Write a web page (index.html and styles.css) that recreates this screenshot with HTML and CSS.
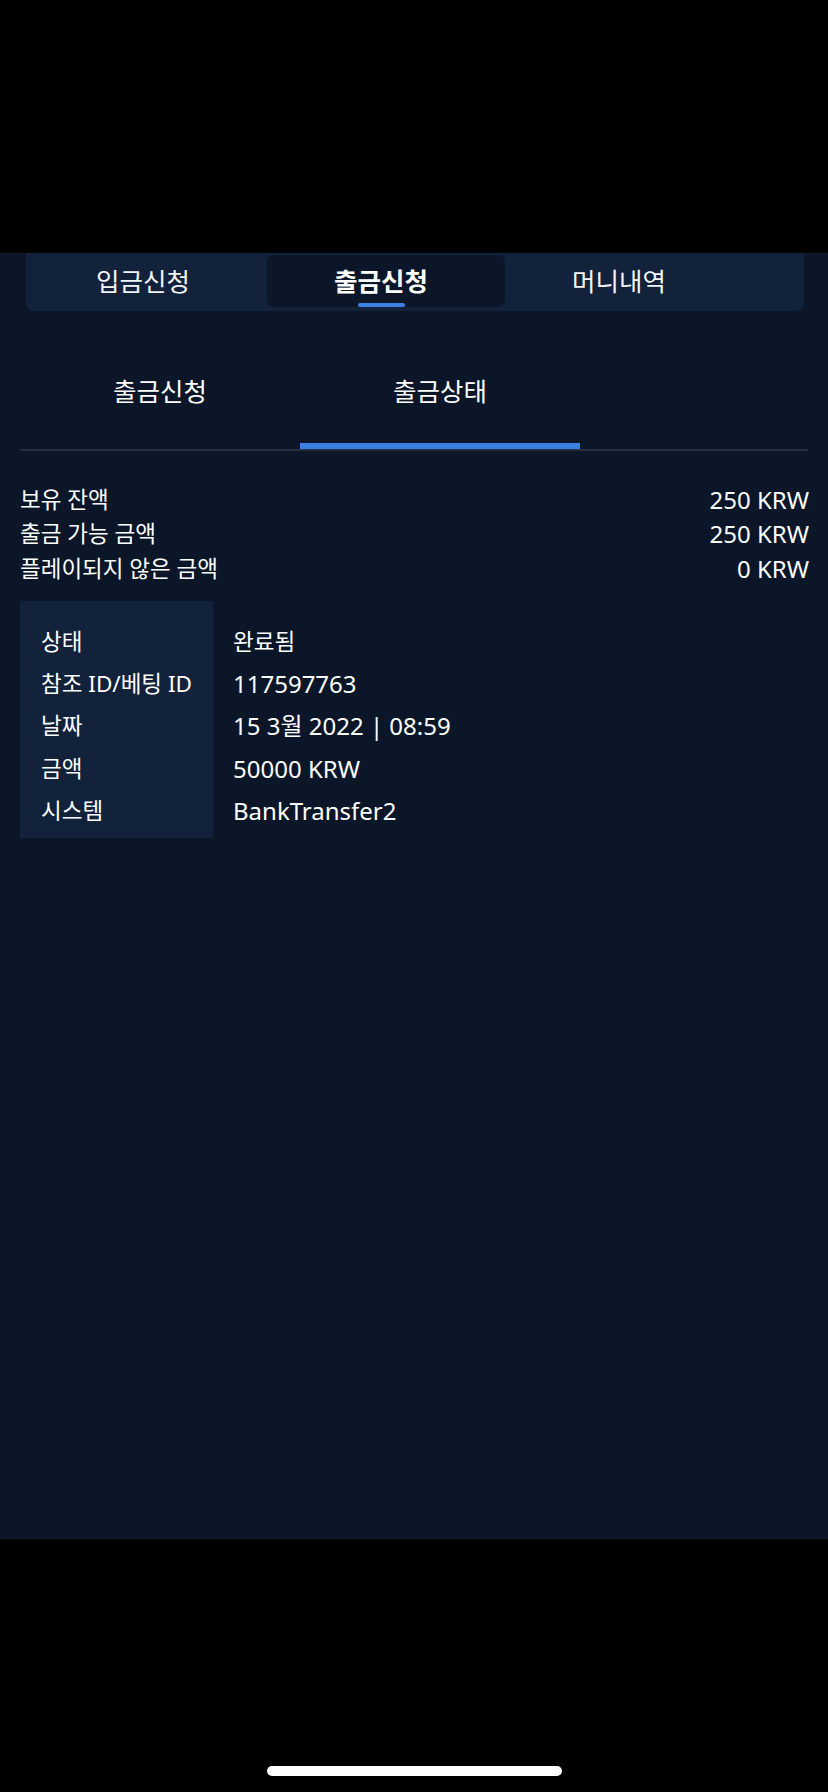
FILE: index.html
```html
<!DOCTYPE html>
<html>
<head>
  <meta charset="utf-8">
  <title>출금상태</title>
  <link rel="stylesheet" href="styles.css">
</head>
<body>
  <div class="phone">
    <div class="top"></div>

    <div class="panel">
      <div class="tabs">
        <div class="tab"><span>입금신청</span><i class="bar"></i></div>
        <div class="tab active"><span>출금신청</span><i class="bar"></i></div>
        <div class="tab"><span>머니내역</span><i class="bar"></i></div>
      </div>

      <div class="subtabs">
        <div class="subtab">출금신청</div>
        <div class="subtab active">출금상태</div>
      </div>

      <div class="summary">
        <div class="row"><span class="ko">보유 잔액</span><span class="num">250 KRW</span></div>
        <div class="row"><span class="ko">출금 가능 금액</span><span class="num">250 KRW</span></div>
        <div class="row"><span class="ko">플레이되지 않은 금액</span><span class="num">0 KRW</span></div>
      </div>

      <div class="detail">
        <div class="keys">
          <div>상태</div>
          <div>참조 ID/베팅 ID</div>
          <div>날짜</div>
          <div>금액</div>
          <div>시스템</div>
        </div>
        <div class="vals">
          <div class="ko">완료됨</div>
          <div>117597763</div>
          <div>15 3월 2022 | 08:59</div>
          <div>50000 KRW</div>
          <div>BankTransfer2</div>
        </div>
      </div>
    </div>

    <div class="bottom">
      <div class="indicator"></div>
    </div>
  </div>
</body>
</html>
```

FILE: styles.css
```css
* {
  margin: 0;
  padding: 0;
  box-sizing: border-box;
}
body {
  background: #000;
  color: #fff;
  font-family: "Noto Sans", "Noto Sans CJK KR", sans-serif;
}
.phone {
  width: 828px;
  height: 1792px;
  display: flex;
  flex-direction: column;
}
.top {
  height: 253px;
  background: #000;
}
.panel {
  height: 1286px;
  background: #0b1729;
}

/* top tabs */
.tabs {
  display: flex;
  margin: 0 24px 0 26px;
  padding: 2px 0 4px 3px;
  background: #13223b;
  border-radius: 0 0 8px 8px;
}
.tab {
  width: 238px;
  height: 52px;
  padding: 10px 10px 0 0;
  display: flex;
  flex-direction: column;
  align-items: center;
  border-radius: 6px;
  font-size: 25.5px;
  line-height: 32px;
  color: #f2f4f7;
}
.tab .bar {
  width: 47px;
  height: 4px;
  margin-top: 6px;
  border-radius: 2px;
  background: #3c80e2;
  visibility: hidden;
}
.tab.active {
  background: #0b1729;
  font-weight: bold;
  color: #fff;
}
.tab.active .bar {
  visibility: visible;
}

/* sub tabs */
.subtabs {
  display: flex;
  margin: 28px 20px 0;
  border-bottom: 2px solid #242f40;
}
.subtab {
  width: 280px;
  padding: 35px 0;
  text-align: center;
  font-size: 25.5px;
  line-height: 34px;
  border-bottom: 6px solid transparent;
}
.subtab.active {
  border-bottom-color: #3c80e2;
}

/* balances */
.summary {
  margin: 32px 19px 0 20px;
}
.row {
  display: flex;
  justify-content: space-between;
  line-height: 34.3px;
  font-size: 24px;
}
.ko {
  font-size: 22.5px;
}

/* status table */
.detail {
  display: flex;
  margin: 15px 20px 0;
  font-size: 24px;
  line-height: 42.3px;
}
.keys {
  width: 193px;
  padding: 20px 0 6px 21px;
  background: #13223b;
  font-size: 22.5px;
}
.vals {
  padding: 20px 0 6px 20px;
}

.bottom {
  flex: 1;
  background: #000;
  padding-top: 227px;
}
.indicator {
  width: 295px;
  height: 10px;
  margin: 0 auto;
  border-radius: 5px;
  background: #fff;
}
```
